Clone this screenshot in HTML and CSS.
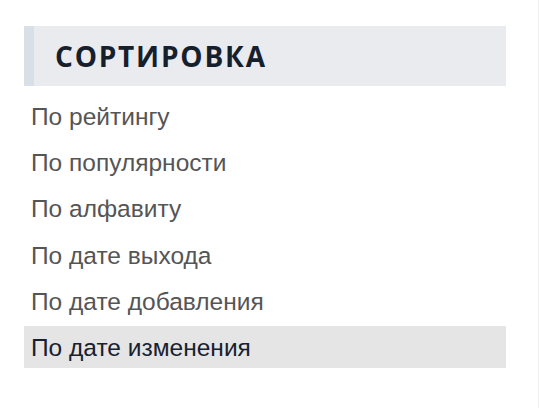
FILE: index.html
```html
<!DOCTYPE html>
<html lang="ru">
<head>
<meta charset="utf-8">
<link rel="stylesheet" href="styles.css">
</head>
<body>
<div class="page">
  <section class="sort">
    <h2 class="sort-title">Сортировка</h2>
    <ul class="sort-list">
      <li class="sort-item">По рейтингу</li>
      <li class="sort-item">По популярности</li>
      <li class="sort-item">По алфавиту</li>
      <li class="sort-item">По дате выхода</li>
      <li class="sort-item">По дате добавления</li>
      <li class="sort-item active">По дате изменения</li>
    </ul>
  </section>
</div>
</body>
</html>
```
FILE: styles.css
```css
html, body {
  margin: 0;
  padding: 0;
  background: #ffffff;
}
.page {
  width: 539px;
  height: 408px;
  box-sizing: border-box;
  border-right: 1px solid #f1f1f1;
  padding: 26px 33px 0 24px;
}
.sort {
  width: 482px;
}
.sort-title {
  margin: 0;
  height: 60px;
  box-sizing: border-box;
  background: #e9ebef;
  border-left: 10px solid #d9dfe7;
  padding-left: 21px;
  display: flex;
  align-items: center;
  font-family: "Open Sans", sans-serif;
  font-weight: 700;
  font-size: 28px;
  letter-spacing: 1.8px;
  text-transform: uppercase;
  color: #16202d;
}
.sort-list {
  list-style: none;
  margin: 8px 0 0;
  padding: 0;
  display: flex;
  flex-direction: column;
  gap: 4.4px;
}
.sort-item {
  height: 42px;
  box-sizing: border-box;
  padding: 3px 7px 0 7px;
  display: flex;
  align-items: center;
  font-family: "Liberation Sans", Arial, sans-serif;
  font-size: 24.5px;
  color: #555555;
}
.sort-item.active {
  background: #e5e5e5;
  color: #17212f;
}
```
